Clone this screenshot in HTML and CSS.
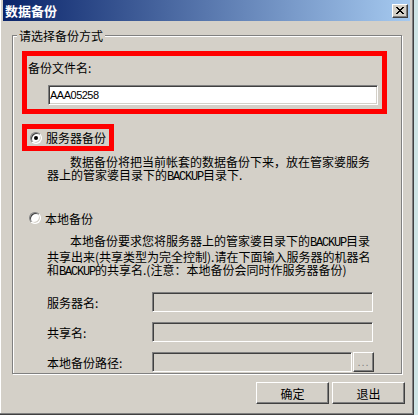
FILE: index.html
```html
<!DOCTYPE html>
<html lang="zh-CN">
<head>
    <meta charset="UTF-8">
    <title>数据备份</title>
    <link rel="stylesheet" href="styles.css">
</head>
<body>

    <div class="window">
        <div class="titlebar">
            <span class="title">数据备份</span>
            <button class="close-btn" title="关闭">
                <svg width="8" height="7" viewBox="0 0 8 7" shape-rendering="crispEdges">
                    <path d="M0 0h2v1h-2zM6 0h2v1h-2zM1 1h2v1h-2zM5 1h2v1h-2zM2 2h4v1h-4zM3 3h2v1h-2zM2 4h4v1h-4zM1 5h2v1h-2zM5 5h2v1h-2zM0 6h2v1h-2zM6 6h2v1h-2z" fill="#000"/>
                </svg>
            </button>
        </div>

        <fieldset class="group">
            <legend>请选择备份方式</legend>

            <!-- nom du fichier -->
            <div class="mark file-box">
                <label for="fileName">备份文件名:</label>
                <input type="text" id="fileName" class="field file-input" value="AAA05258">
            </div>

            <div class="mark server-box">
                <label class="radio"><span class="radio-dot checked"></span>服务器备份</label>
            </div>

            <p class="desc server-desc">数据备份将把当前帐套的数据备份下来，放在管家婆服务<br>器上的管家婆目录下的<span class="latin">BACKUP</span>目录下.</p>

            <label class="radio local-radio"><span class="radio-dot"></span>本地备份</label>

            <p class="desc local-desc">本地备份要求您将服务器上的管家婆目录下的<span class="latin">BACKUP</span>目录<br>共享出来(共享类型为完全控制).请在下面输入服务器的机器名<br>和<span class="latin">BACKUP</span>的共享名.(注意：本地备份会同时作服务器备份)</p>

            <div class="form-rows">
                <div class="form-row">
                    <span class="row-label">服务器名:</span>
                    <input type="text" class="field wide" disabled>
                </div>
                <div class="form-row">
                    <span class="row-label">共享名:</span>
                    <input type="text" class="field wide" disabled>
                </div>
                <div class="form-row">
                    <span class="row-label">本地备份路径:</span>
                    <input type="text" class="field path" disabled>
                    <button class="browse-btn" disabled>...</button>
                </div>
            </div>
        </fieldset>

        <div class="buttons">
            <button class="btn">确定</button>
            <button class="btn">退出</button>
        </div>
    </div>

</body>
</html>
```

FILE: styles.css
```css
* {
    box-sizing: border-box;
}

body {
    margin: 0;
    width: 418px;
    height: 415px;
    overflow: hidden;
    background: #cfe5e5;
    font-family: "Noto Sans CJK SC", sans-serif;
    font-size: 12px;
    color: #000;
}

/* Fenêtre principale */
.window {
    width: 414px;
    height: 415px;
    background: #d4d0c8;
    padding: 0 3px 3px 3px;
    border-right: 1px solid #404040;
    border-bottom: 1px solid #404040;
    box-shadow: inset -1px -1px 0 #808080, inset 1px 0 0 #fff;
    display: flex;
    flex-direction: column;
}

.titlebar {
    height: 21px;
    flex: none;
    display: flex;
    align-items: center;
    padding: 0 2px;
    background: linear-gradient(to right, #0a246a, #a6caf0);
}

.title {
    color: #fff;
    font-weight: bold;
    font-size: 13px;
    line-height: 15px;
}

.close-btn {
    margin-left: auto;
    width: 16px;
    height: 14px;
    padding: 0;
    display: flex;
    align-items: center;
    justify-content: center;
    background: #d4d0c8;
    border: 1px solid;
    border-color: #fff #404040 #404040 #fff;
    box-shadow: inset -1px -1px 0 #808080;
}

/* Groupe d'options */
.group {
    margin: 7px 8px 0 9px;
    padding: 0;
    height: 346px;
    min-width: 0;
    flex: none;
    border: 1px solid #808080;
    box-shadow: inset 1px 1px 0 #fff, 1px 1px 0 #fff;
}

.group legend {
    margin-left: 4px;
    padding: 0 2px;
    line-height: 15px;
    background: #d4d0c8;
}

/* Cadres rouges */
.mark {
    border: 5px solid #f00;
}

.file-box {
    margin: 8px 14px 0 9px;
    height: 63px;
    padding: 4px 0 0 1px;
}

.file-box label {
    display: block;
    line-height: 15px;
}

.field {
    display: block;
    height: 20px;
    margin: 0;
    padding: 0 1px;
    background: #d4d0c8;
    border: 1px solid;
    border-color: #808080 #fff #fff #808080;
    box-shadow: inset 1px 1px 0 #404040, inset -1px -1px 0 #d4d0c8;
    font-family: "Liberation Sans", sans-serif;
    font-size: 11px;
    color: #000;
    outline: none;
}

.file-input {
    width: 330px;
    margin: 10px 0 0 20px;
    background: #fff;
    letter-spacing: -0.5px;
}

.server-box {
    margin: 10px 0 0 9px;
    width: 92px;
    height: 27px;
    padding-left: 3px;
    display: flex;
    align-items: center;
}

.radio {
    display: flex;
    align-items: center;
    gap: 4px;
    line-height: 15px;
}

.radio-dot {
    width: 12px;
    height: 12px;
    flex: none;
    border-radius: 50%;
    background: #fff;
    border: 1px solid;
    border-color: #808080 #fff #fff #808080;
    box-shadow: inset 1px 1px 0 #404040, inset -1px -1px 0 #d4d0c8;
    display: flex;
    align-items: center;
    justify-content: center;
}

.radio-dot.checked::after {
    content: "";
    width: 4px;
    height: 4px;
    border-radius: 50%;
    background: #000;
}

.local-radio {
    margin: 26px 0 0 16px;
    height: 16px;
}

/* Textes descriptifs */
.desc {
    margin: 0 0 0 34px;
    line-height: 13px;
    text-indent: 23px;
    white-space: nowrap;
}

.server-desc {
    margin-top: 4px;
}

.local-desc {
    margin-top: 8px;
}

.latin {
    font-family: "Liberation Mono", monospace;
    font-size: 12px;
    letter-spacing: -1.2px;
}

/* Champs du bas */
.form-rows {
    margin: 13px 0 0 34px;
    display: flex;
    flex-direction: column;
    gap: 10px;
}

.form-row {
    display: flex;
    align-items: center;
    height: 20px;
}

.row-label {
    width: 105px;
    flex: none;
    line-height: 15px;
}

.wide {
    width: 221px;
}

.path {
    width: 200px;
}

.browse-btn {
    width: 21px;
    height: 20px;
    margin-left: 1px;
    padding: 0;
    background: #d4d0c8;
    border: 1px solid;
    border-color: #fff #404040 #404040 #fff;
    box-shadow: inset -1px -1px 0 #808080;
    font-family: "Liberation Sans", sans-serif;
    font-size: 11px;
    color: #808080;
    letter-spacing: 1px;
}

/* Boutons */
.buttons {
    margin: 8px 5px 0 0;
    display: flex;
    justify-content: flex-end;
    gap: 3px;
}

.btn {
    width: 73px;
    height: 22px;
    padding: 0;
    background: #d4d0c8;
    border: 1px solid;
    border-color: #fff #404040 #404040 #fff;
    box-shadow: inset -1px -1px 0 #808080;
    font-family: "Noto Sans CJK SC", sans-serif;
    font-size: 12px;
    color: #000;
}
```
